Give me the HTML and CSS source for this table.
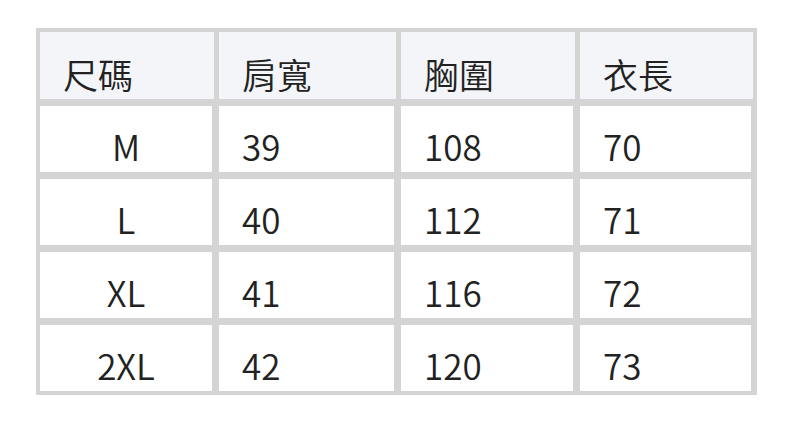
FILE: index.html
```html
<!DOCTYPE html>
<html lang="zh-Hant">
<head>
<meta charset="utf-8">
<title>尺碼表</title>
<link rel="stylesheet" href="styles.css">
</head>
<body>
<div class="size-table">
  <div class="cell head">尺碼</div>
  <div class="cell head">肩寬</div>
  <div class="cell head">胸圍</div>
  <div class="cell head">衣長</div>

  <div class="cell body center">M</div>
  <div class="cell body">39</div>
  <div class="cell body">108</div>
  <div class="cell body">70</div>

  <div class="cell body center">L</div>
  <div class="cell body">40</div>
  <div class="cell body">112</div>
  <div class="cell body">71</div>

  <div class="cell body center">XL</div>
  <div class="cell body">41</div>
  <div class="cell body">116</div>
  <div class="cell body">72</div>

  <div class="cell body center">2XL</div>
  <div class="cell body">42</div>
  <div class="cell body">120</div>
  <div class="cell body">73</div>
</div>
</body>
</html>
```

FILE: styles.css
```css
html, body {
  margin: 0;
  padding: 0;
  background: #ffffff;
}

body {
  padding: 28px 0 0 36px;
  font-family: "Noto Sans CJK TC", "Noto Sans CJK SC", "Noto Sans", sans-serif;
  color: #222222;
}

.size-table {
  width: 713px;
  padding: 4px;
  background: #d4d4d4;
  display: grid;
  grid-template-columns: 174px 177px 174px 173px;
  grid-template-rows: 67px repeat(4, 66px);
  column-gap: 5px;
  row-gap: 7px;
}

.cell {
  font-size: 35px;
  font-weight: 350;
  line-height: 36px;
  padding-left: 23px;
  box-sizing: border-box;
  white-space: nowrap;
}

.head {
  background: #f4f5f9;
  padding-top: 24px;
}

.body {
  background: #ffffff;
  border-right: 2px solid #d4d4d4;
  padding-top: 22px;
}

.center {
  text-align: center;
  padding-left: 0;
}
```
